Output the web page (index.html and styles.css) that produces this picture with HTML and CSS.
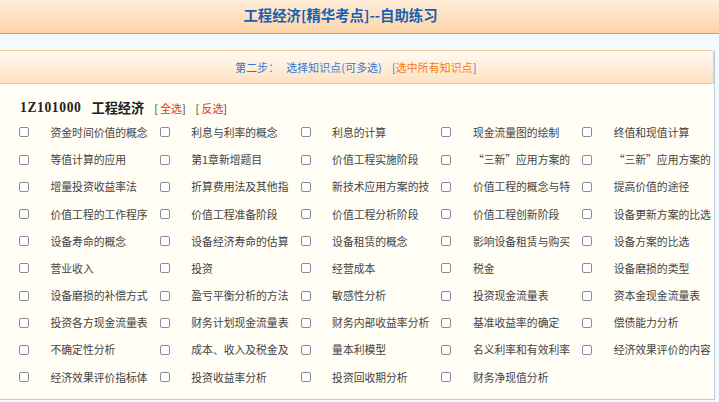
FILE: index.html
```html
<!DOCTYPE html>
<html lang="zh-CN">
<head>
<meta charset="utf-8">
<title>工程经济[精华考点]--自助练习</title>
<link rel="stylesheet" href="styles.css">
</head>
<body>
<div class="header">工程经济[精华考点]--自助练习</div>
<div class="strip"></div>
<div class="panel">
  <div class="stepbar">
    <span class="step">第二步：</span><span class="step choose">选择知识点(可多选)</span><span class="step all">[<span class="orange">选中所有知识点</span>]</span>
  </div>
  <div class="content">
    <div class="title"><span class="code">1Z101000</span><span class="name">工程经济</span><span class="op">[ <span class="red">全选</span>]</span><span class="op">[ <span class="red">反选</span>]</span></div>
    <div class="grid">
      <label class="cell"><input type="checkbox"><span class="lab">资金时间价值的概念</span></label>
      <label class="cell"><input type="checkbox"><span class="lab">利息与利率的概念</span></label>
      <label class="cell"><input type="checkbox"><span class="lab">利息的计算</span></label>
      <label class="cell"><input type="checkbox"><span class="lab">现金流量图的绘制</span></label>
      <label class="cell"><input type="checkbox"><span class="lab">终值和现值计算</span></label>

      <label class="cell"><input type="checkbox"><span class="lab">等值计算的应用</span></label>
      <label class="cell"><input type="checkbox"><span class="lab">第1章新增题目</span></label>
      <label class="cell"><input type="checkbox"><span class="lab">价值工程实施阶段</span></label>
      <label class="cell"><input type="checkbox"><span class="lab">“三新”应用方案的</span></label>
      <label class="cell"><input type="checkbox"><span class="lab">“三新”应用方案的</span></label>

      <label class="cell"><input type="checkbox"><span class="lab">增量投资收益率法</span></label>
      <label class="cell"><input type="checkbox"><span class="lab">折算费用法及其他指</span></label>
      <label class="cell"><input type="checkbox"><span class="lab">新技术应用方案的技</span></label>
      <label class="cell"><input type="checkbox"><span class="lab">价值工程的概念与特</span></label>
      <label class="cell"><input type="checkbox"><span class="lab">提高价值的途径</span></label>

      <label class="cell"><input type="checkbox"><span class="lab">价值工程的工作程序</span></label>
      <label class="cell"><input type="checkbox"><span class="lab">价值工程准备阶段</span></label>
      <label class="cell"><input type="checkbox"><span class="lab">价值工程分析阶段</span></label>
      <label class="cell"><input type="checkbox"><span class="lab">价值工程创新阶段</span></label>
      <label class="cell"><input type="checkbox"><span class="lab">设备更新方案的比选</span></label>

      <label class="cell"><input type="checkbox"><span class="lab">设备寿命的概念</span></label>
      <label class="cell"><input type="checkbox"><span class="lab">设备经济寿命的估算</span></label>
      <label class="cell"><input type="checkbox"><span class="lab">设备租赁的概念</span></label>
      <label class="cell"><input type="checkbox"><span class="lab">影响设备租赁与购买</span></label>
      <label class="cell"><input type="checkbox"><span class="lab">设备方案的比选</span></label>

      <label class="cell"><input type="checkbox"><span class="lab">营业收入</span></label>
      <label class="cell"><input type="checkbox"><span class="lab">投资</span></label>
      <label class="cell"><input type="checkbox"><span class="lab">经营成本</span></label>
      <label class="cell"><input type="checkbox"><span class="lab">税金</span></label>
      <label class="cell"><input type="checkbox"><span class="lab">设备磨损的类型</span></label>

      <label class="cell"><input type="checkbox"><span class="lab">设备磨损的补偿方式</span></label>
      <label class="cell"><input type="checkbox"><span class="lab">盈亏平衡分析的方法</span></label>
      <label class="cell"><input type="checkbox"><span class="lab">敏感性分析</span></label>
      <label class="cell"><input type="checkbox"><span class="lab">投资现金流量表</span></label>
      <label class="cell"><input type="checkbox"><span class="lab">资本金现金流量表</span></label>

      <label class="cell"><input type="checkbox"><span class="lab">投资各方现金流量表</span></label>
      <label class="cell"><input type="checkbox"><span class="lab">财务计划现金流量表</span></label>
      <label class="cell"><input type="checkbox"><span class="lab">财务内部收益率分析</span></label>
      <label class="cell"><input type="checkbox"><span class="lab">基准收益率的确定</span></label>
      <label class="cell"><input type="checkbox"><span class="lab">偿债能力分析</span></label>

      <label class="cell"><input type="checkbox"><span class="lab">不确定性分析</span></label>
      <label class="cell"><input type="checkbox"><span class="lab">成本、收入及税金及</span></label>
      <label class="cell"><input type="checkbox"><span class="lab">量本利模型</span></label>
      <label class="cell"><input type="checkbox"><span class="lab">名义利率和有效利率</span></label>
      <label class="cell"><input type="checkbox"><span class="lab">经济效果评价的内容</span></label>

      <label class="cell"><input type="checkbox"><span class="lab">经济效果评价指标体</span></label>
      <label class="cell"><input type="checkbox"><span class="lab">投资收益率分析</span></label>
      <label class="cell"><input type="checkbox"><span class="lab">投资回收期分析</span></label>
      <label class="cell"><input type="checkbox"><span class="lab">财务净现值分析</span></label>
    </div>
  </div>
</div>
</body>
</html>
```
FILE: styles.css
```css
html, body {
  margin: 0;
  padding: 0;
}
body {
  width: 719px;
  height: 402px;
  overflow: hidden;
  background: #f4f9ff;
  font-family: "Noto Sans CJK SC", "Liberation Sans", sans-serif;
}
.header {
  height: 30px;
  padding-bottom: 3px;
  line-height: 30px;
  padding-right: 38px;
  text-align: center;
  font-size: 14.4px;
  font-weight: bold;
  color: #1760b2;
  background: linear-gradient(#feecd9, #fcd4a6);
  border-bottom: 1px solid #7fb0e2;
}
.strip {
  height: 16px;
}
.panel {
  width: 714px;
  border-right: 1px solid #b6cde2;
  border-bottom: 1px solid #b6cde2;
  background: #fffdf4;
  overflow: hidden;
}
.stepbar {
  height: 32px;
  margin-left: -2px;
  border: 1px solid #fbc98f;
  border-top-right-radius: 3px;
  background: linear-gradient(#fffaf3, #fde1c2);
  display: flex;
  justify-content: center;
  align-items: center;
  font-size: 10.8px;
  letter-spacing: 0.2px;
  color: #2c7ad2;
}
.choose {
  margin-left: 7px;
}
.all {
  margin-left: 10px;
}
.orange {
  color: #f77a10;
}
.content {
  padding: 14.4px 0 8.6px 0;
}
.title {
  height: 20px;
  line-height: 20px;
  padding-left: 20px;
  display: flex;
  align-items: center;
  color: #222;
}
.code {
  font-family: "Liberation Serif", "Noto Sans CJK SC", serif;
  font-weight: bold;
  font-size: 13.6px;
  letter-spacing: 0.6px;
}
.name {
  font-weight: bold;
  font-size: 13.2px;
  margin-left: 10px;
}
.op {
  font-size: 10.8px;
  color: #333;
  margin-left: 10px;
}
.red {
  color: #d83a10;
}
.grid {
  display: grid;
  grid-template-columns: repeat(5, 140.8px);
  grid-auto-rows: 27.2px;
  padding-left: 12px;
}
.cell {
  display: flex;
  align-items: center;
  overflow: hidden;
  white-space: nowrap;
}
.cell input {
  appearance: none;
  -webkit-appearance: none;
  width: 10px;
  height: 10px;
  margin: 1px 0 0 7px;
  border: 1px solid #8a8a99;
  border-radius: 2px;
  background: #fff;
  box-sizing: border-box;
  flex: none;
}
.lab {
  margin-left: 21.5px;
  font-size: 10.8px;
  color: #444;
  flex: none;
}
```
